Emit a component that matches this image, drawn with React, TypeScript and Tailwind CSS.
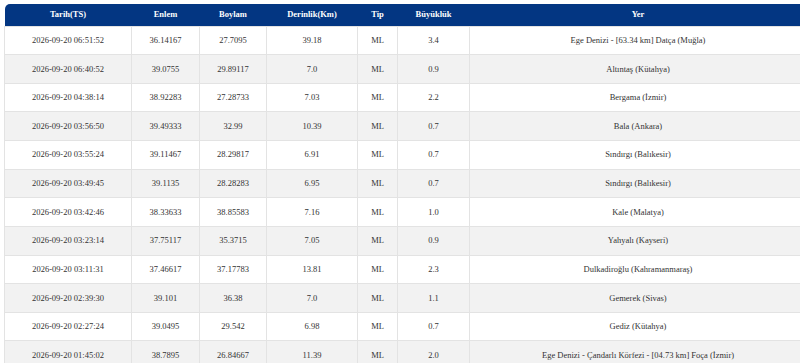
const rows: string[][] = [
  ["2026-09-20 06:51:52", "36.14167", "27.7095", "39.18", "ML", "3.4", "Ege Denizi - [63.34 km] Datça (Muğla)"],
  ["2026-09-20 06:40:52", "39.0755", "29.89117", "7.0", "ML", "0.9", "Altıntaş (Kütahya)"],
  ["2026-09-20 04:38:14", "38.92283", "27.28733", "7.03", "ML", "2.2", "Bergama (İzmir)"],
  ["2026-09-20 03:56:50", "39.49333", "32.99", "10.39", "ML", "0.7", "Bala (Ankara)"],
  ["2026-09-20 03:55:24", "39.11467", "28.29817", "6.91", "ML", "0.7", "Sındırgı (Balıkesir)"],
  ["2026-09-20 03:49:45", "39.1135", "28.28283", "6.95", "ML", "0.7", "Sındırgı (Balıkesir)"],
  ["2026-09-20 03:42:46", "38.33633", "38.85583", "7.16", "ML", "1.0", "Kale (Malatya)"],
  ["2026-09-20 03:23:14", "37.75117", "35.3715", "7.05", "ML", "0.9", "Yahyalı (Kayseri)"],
  ["2026-09-20 03:11:31", "37.46617", "37.17783", "13.81", "ML", "2.3", "Dulkadiroğlu (Kahramanmaraş)"],
  ["2026-09-20 02:39:30", "39.101", "36.38", "7.0", "ML", "1.1", "Gemerek (Sivas)"],
  ["2026-09-20 02:27:24", "39.0495", "29.542", "6.98", "ML", "0.7", "Gediz (Kütahya)"],
  ["2026-09-20 01:45:02", "38.7895", "26.84667", "11.39", "ML", "2.0", "Ege Denizi - Çandarlı Körfezi - [04.73 km] Foça (İzmir)"],
];

const headers = ["Tarih(TS)", "Enlem", "Boylam", "Derinlik(Km)", "Tip", "Büyüklük", "Yer"];
const widths = ["w-[127px]", "w-[68px]", "w-[67px]", "w-[91px]", "w-[40px]", "w-[72px]", "w-[337px]"];

export default function App() {
  return (
    <div className="w-[800px] h-[363px] overflow-hidden bg-white pl-[4px] pt-[4px] font-['Liberation_Serif'] text-[8.5px]">
      <table className="w-[802px] table-fixed border-collapse text-[#333]">
        <thead>
          <tr className="h-[22px] bg-[#033682] text-white">
            {headers.map((h, i) => (
              <th
                key={h}
                className={`${widths[i]} p-0 text-center font-bold ${i === 0 ? "rounded-tl-[5px]" : ""}`}
              >
                {h}
              </th>
            ))}
          </tr>
        </thead>
        <tbody>
          {rows.map((r, ri) => (
            <tr key={ri} className={`h-[28.64px] ${ri % 2 === 1 ? "bg-[#f2f2f2]" : "bg-white"}`}>
              {r.map((c, ci) => (
                <td key={ci} className="border border-[#e3e3e3] p-0 text-center whitespace-nowrap">
                  {c}
                </td>
              ))}
            </tr>
          ))}
        </tbody>
      </table>
    </div>
  );
}
